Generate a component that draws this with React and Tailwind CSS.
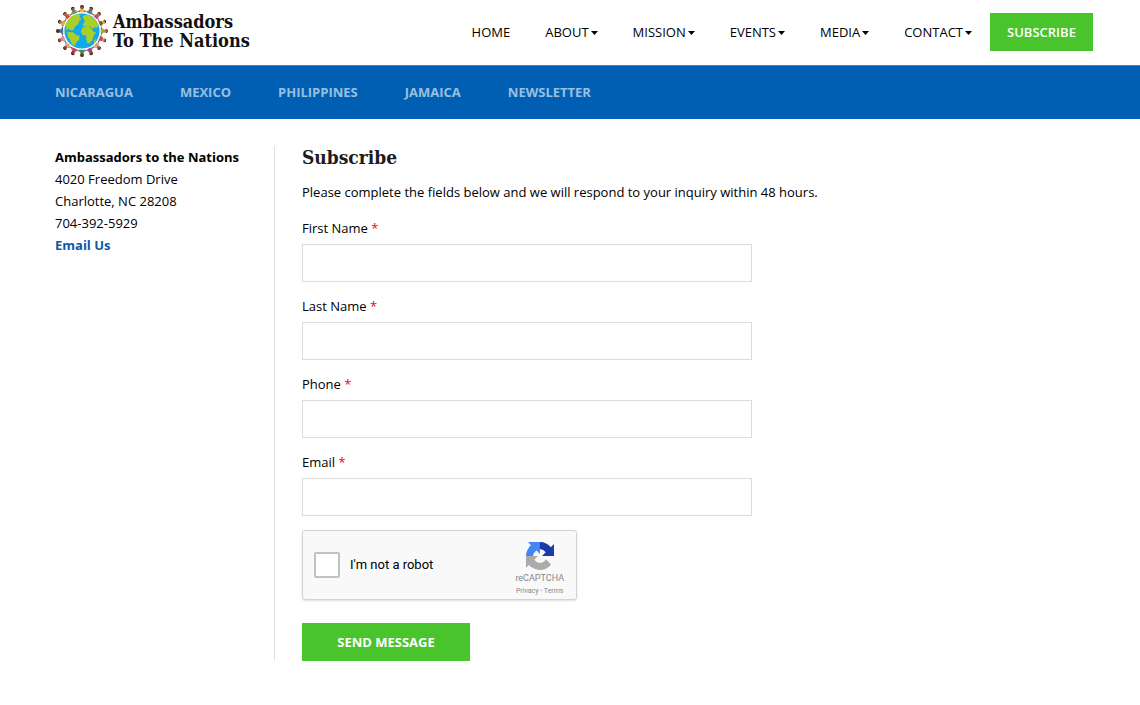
const people = [
  ["#8a4e26", "#f2b632"], ["#8c5a2e", "#2f86c4"], ["#b06a3a", "#b8468c"], ["#e0a04a", "#8a5a2a"],
  ["#b8843c", "#8fae4a"], ["#c98b55", "#d43d5a"], ["#9c5a3c", "#e09a8a"], ["#7e4b30", "#9a3fa0"],
  ["#6a3c24", "#2f9a5c"], ["#6d4430", "#e0306c"], ["#8a4e2c", "#d9a08f"], ["#b5672f", "#e08ab0"],
  ["#5a3220", "#3d78b8"], ["#9a6540", "#d0b24a"], ["#b3653c", "#e8402a"], ["#8d5a3b", "#47a855"],
];

function Globe() {
  return (
    <svg viewBox="0 0 54 54" className="size-[54px] shrink-0" aria-hidden="true">
      <circle cx="27" cy="27" r="19.600" fill="none" stroke="#4a4040" strokeWidth=".9" strokeDasharray="3.200 1.200" />
      {people.map(([skin, shirt], i) => (
        <g key={i} transform={`rotate(${i * 22.5} 27 27)`}>
          <path d="M23.200 7.600 25.600 5.600h2.800l2.400 2" fill="none" stroke={skin} strokeWidth=".6" />
          <path d="M25.400 4.600h3.200l.6 3.600h-4.400z" fill={shirt} />
          <circle cx="27" cy="3.200" r="1.900" fill={skin} />
          <path d="M25.100 3a1.900 1.900 0 0 1 3.800 0l-1.900-.8z" fill="#4a2b1c" />
        </g>
      ))}
      <circle cx="27" cy="27" r="17.600" fill="#12a8ea" />
      <g fill="#a9cf28">
        <path d="M11 20c2-5 6-9 11.500-10l3 1.200-1 2.400 2 1.400-2.800 2.600-.2 2.400-3.600 2.400-1.200 3.600-2.700.4-2.300-1.600-2.400 1.600z" />
        <path d="m12.500 28 5.500.2 3.400 2.700 3.300 1-.7 3.900-2.900 2.900-1.600 3.300-3-2-1.600-4.800-2.400-3z" />
        <path d="m27.500 12.500 3.300-2 4.700 1.200 4.300 3.300 3.400 5.500-.8 3.500-3-.8-1.700 1.800-2.300-2.600-2.700.8-2.300-1.500-2.300 1-.4-2.600 2-1.700-.4-2.500z" />
        <path d="m27 24 4.200-1.700 4.700 1.500 2.500 4 2.600.5-2.600 3.600-.9 4.200-3 3.400-2.300-.4-1.100-4.300.3-3.200-3.700-.6-1.800-3.200z" />
        <path d="m39.200 36.400 1.800-1.600-.3 3-1.800 1.500z" />
      </g>
    </svg>
  );
}

function CaptchaLogo() {
  return (
    <svg viewBox="0 0 64 64" className="size-7" aria-hidden="true">
      <path fill="#1c3aa9" d="M64 31.955l-.033-1.370V4.687l-7.160 7.160C50.948 4.674 42.033.093 32.050.093c-10.400 0-19.622 4.960-25.458 12.640l11.736 11.860a15.550 15.550 0 0 1 4.754-5.334c2.050-1.600 4.952-2.906 8.968-2.906.485 0 .860.057 1.135.163 4.976.393 9.288 3.140 11.828 7.124l-8.307 8.307L64 31.953" />
      <path fill="#4285f4" d="M31.862.094l-1.370.033H4.594l7.160 7.160C4.580 13.147 0 22.060 0 32.046c0 10.400 4.960 19.622 12.640 25.458L24.500 45.768a15.550 15.550 0 0 1-5.334-4.754c-1.600-2.050-2.906-4.952-2.906-8.968 0-.485.057-.860.163-1.135.393-4.976 3.140-9.288 7.124-11.828l8.307 8.307L31.860.095" />
      <path fill="#ababab" d="M.001 32.045l.033 1.370v25.898l7.160-7.160c5.860 7.173 14.774 11.754 24.760 11.754 10.400 0 19.622-4.960 25.458-12.640l-11.736-11.860a15.550 15.550 0 0 1-4.754 5.334c-2.050 1.600-4.952 2.906-8.968 2.906-.485 0-.860-.057-1.135-.163-4.976-.393-9.288-3.140-11.828-7.124l8.307-8.307c-10.522.040-22.400.066-27.295-.005" />
    </svg>
  );
}

const menu = ["Home", "About", "Mission", "Events", "Media", "Contact"];
const regions = ["Nicaragua", "Mexico", "Philippines", "Jamaica", "Newsletter"];
const fields = [
  { id: "first-name", label: "First Name", type: "text" },
  { id: "last-name", label: "Last Name", type: "text" },
  { id: "phone", label: "Phone", type: "tel" },
  { id: "email", label: "Email", type: "email" },
];

export default function App() {
  return (
    <div className='min-h-screen bg-white font-["Open_Sans",sans-serif] text-[13px] leading-5 text-black'>
      <header className="flex h-[65px] items-center justify-between pr-[47px] pb-px pl-[55px]">
        <a href="#home" className="flex items-center gap-1 pb-0.5">
          <Globe />
          <span className='font-["Roboto_Slab","DejaVu_Serif_Condensed","DejaVu_Serif",serif] text-lg leading-[19px] font-bold whitespace-nowrap text-[#111]'>
            Ambassadors<br />To The Nations
          </span>
        </a>
        <nav className="flex items-center gap-[18px]">
          <ul className="flex gap-[35px]">
            {menu.map((item, i) => (
              <li key={item}>
                <a href={`#${item.toLowerCase()}`} className="flex items-center gap-0.5 uppercase">
                  {item}
                  {i > 0 && (
                    <svg viewBox="0 0 7 4" className="mt-0.5 h-1 w-[7px]" aria-hidden="true">
                      <path d="M0 0h7L3.500 4z" />
                    </svg>
                  )}
                </a>
              </li>
            ))}
          </ul>
          <a href="#subscribe" className="flex h-[38px] w-[103px] items-center justify-center bg-[#49c42c] font-semibold text-white uppercase">
            Subscribe
          </a>
        </nav>
      </header>

      <nav className="border-t border-[#4d86bd] bg-[#005fb2]">
        <ul className="flex h-[53px] items-center gap-[47px] pb-0.5 pl-[55px] font-bold text-[#99bfe0] uppercase">
          {regions.map((region) => (
            <li key={region}><a href={`#${region.toLowerCase()}`}>{region}</a></li>
          ))}
        </ul>
      </nav>

      <div className="flex pt-[27px] pr-[47px] pb-11 pl-[55px]">
        <aside className="w-[219px] shrink-0 leading-[22px]">
          <h2 className="font-bold">Ambassadors to the Nations</h2>
          <address className="not-italic">
            4020 Freedom Drive<br />
            Charlotte, NC 28208<br />
            704-392-5929
          </address>
          <a href="#email-us" className="font-bold text-[#0b58a6]">Email Us</a>
        </aside>

        <main className="grow border-l border-[#d9e2e8] pl-[27px]">
          <h1 className='font-["Roboto_Slab","DejaVu_Serif_Condensed","DejaVu_Serif",serif] text-[19px] leading-[22px] font-bold text-[#1c1c1c]'>Subscribe</h1>
          <p className="mt-3.5">Please complete the fields below and we will respond to your inquiry within 48 hours.</p>
          <form className="mt-4 max-w-[450px]" onSubmit={(e) => e.preventDefault()}>
            <div className="flex flex-col gap-3.5">
              {fields.map((field) => (
                <div key={field.id}>
                  <label htmlFor={field.id} className="block">
                    {field.label} <span className="text-[#f00]">*</span>
                  </label>
                  <input id={field.id} name={field.id} type={field.type} required className="mt-1.5 block h-[38px] w-full border border-[#dcdcdc] bg-white px-3 shadow-none outline-none" />
                </div>
              ))}
            </div>

            <div className='mt-3.5 flex h-[70px] w-[275px] items-center justify-between rounded-[3px] border border-[#d3d3d3] bg-[#f9f9f9] pr-3 pl-[11px] font-["Roboto",sans-serif] shadow-sm'>
              <div className="flex items-center gap-2.5">
                <input id="robot" type="checkbox" className="size-[26px] appearance-none rounded-[2px] border-2 border-[#c1c1c1] bg-white" />
                <label htmlFor="robot">I'm not a robot</label>
              </div>
              <div className="flex flex-col items-center pt-2 text-[#888]">
                <CaptchaLogo />
                <span className="text-[9px] leading-4">reCAPTCHA</span>
                <span className="text-[7px] leading-[10px] whitespace-nowrap">
                  <a href="#privacy">Privacy</a> - <a href="#terms">Terms</a>
                </span>
              </div>
            </div>

            <button type="submit" className="mt-[23px] h-[38px] w-[168px] bg-[#49c42c] font-bold text-white uppercase">
              Send Message
            </button>
          </form>
        </main>
      </div>
    </div>
  );
}
